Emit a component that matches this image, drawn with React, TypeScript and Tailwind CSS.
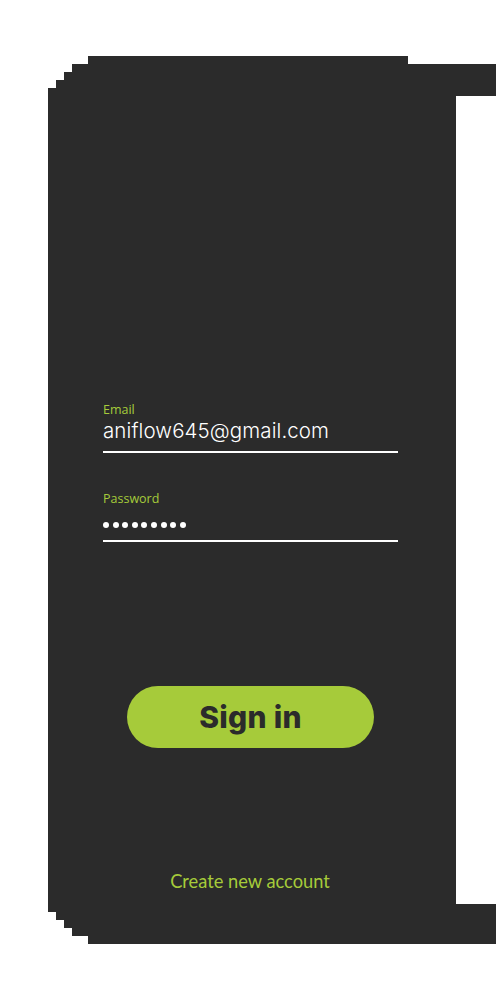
import React from "react";

function Band({ left, right, h = "h-[8px]" }: { left: string; right: string; h?: string }) {
  return (
    <div className="flex">
      <div className={`${left} shrink-0`} />
      <div className={`${right} ${h} bg-[#2b2b2b]`} />
    </div>
  );
}

export default function App() {
  return (
    <div className="w-[500px] h-[1000px] bg-white pt-[56px]" style={{ fontFamily: "'Open Sans', sans-serif" }}>
      <Band left="w-[88px]" right="w-[320px]" />
      <Band left="w-[72px]" right="w-[424px]" />
      <Band left="w-[64px]" right="w-[432px]" />
      <Band left="w-[56px]" right="w-[440px]" />
      <Band left="w-[48px]" right="w-[448px]" />

      <div className="flex">
        <div className="w-[48px] shrink-0" />
        <div className="w-[408px] h-[808px] bg-[#2b2b2b] flex flex-col pt-[306px]">
          <div className="ml-[55px] w-[295px] flex flex-col">
            <div className="text-[12.5px] leading-[16px] text-[#a6cb3a]" style={{ fontFamily: "'Open Sans', sans-serif" }}>Email</div>
            <div className="text-[20.5px] leading-[26px] text-white font-light tracking-[0.1px]" style={{ fontFamily: "Inter, sans-serif" }}>aniflow645@gmail.com</div>
            <div className="mt-[7px] h-[2px] bg-white" />

            <div className="mt-[38px] text-[12.5px] leading-[16px] text-[#a6cb3a]" style={{ fontFamily: "'Open Sans', sans-serif" }}>Password</div>
            <div className="mt-[10px] flex gap-[3.6px] h-[16px] items-center">
              {Array.from({ length: 9 }).map((_, i) => (
                <span key={i} className="w-[6px] h-[6px] rounded-full bg-white" />
              ))}
            </div>
            <div className="mt-[7px] h-[2px] bg-white" />
          </div>

          <div className="mt-[144px] ml-[79px] w-[247px] h-[62px] rounded-full bg-[#a6cb3a] flex items-center justify-center">
            <span className="text-[30px] font-extrabold text-[#2b2b2b] tracking-[0.3px]" style={{ fontFamily: "Inter, sans-serif" }}>Sign in</span>
          </div>

          <div className="mt-[121px] ml-[-48px] w-[500px] text-center text-[18.3px] leading-[24px] text-[#a6cb3a]" style={{ fontFamily: "Lato, sans-serif" }}>
            Create new account
          </div>
        </div>
      </div>

      <Band left="w-[48px]" right="w-[448px]" />
      <Band left="w-[56px]" right="w-[440px]" />
      <Band left="w-[64px]" right="w-[432px]" />
      <Band left="w-[72px]" right="w-[424px]" />
      <Band left="w-[88px]" right="w-[408px]" />
    </div>
  );
}
